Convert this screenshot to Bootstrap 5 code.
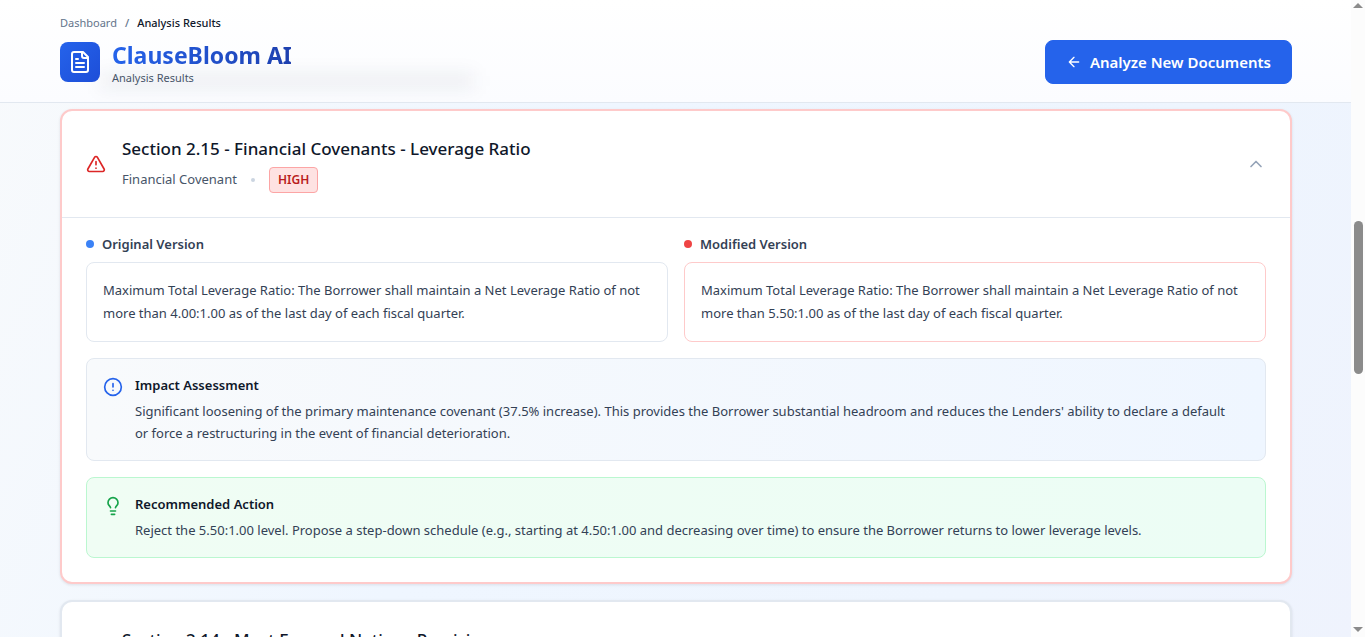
<!DOCTYPE html>
<html lang="en">
<head>
<meta charset="utf-8">
<meta name="viewport" content="width=device-width, initial-scale=1">
<title>ClauseBloom AI - Analysis Results</title>
<link rel="stylesheet" href="https://cdn.jsdelivr.net/npm/bootstrap@5.3.0/dist/css/bootstrap.min.css">
<style>
  html, body { height: 100%; }
  body {
    font-family: "Noto Sans", "Open Sans", sans-serif;
    font-size: 13px;
    color: #334155;
    background: linear-gradient(115deg, #f8fafc 0%, #eff6ff 40%, #eef5fe 75%, #eff3fd 100%);
    overflow: hidden;
  }
  .app-shell { height: 100vh; padding-right: 14px; }
  .page-wrap { padding-left: 60px; padding-right: 59px; }
  .app-header {
    background: linear-gradient(#fff, #fbfcff);
    border-bottom: 1px solid #e2e8f0;
    padding-top: 13px;
    padding-bottom: 17px;
    position: relative;
    overflow: hidden;
  }
  .app-header::before {
    content: "";
    position: absolute;
    left: 100px; top: 74px;
    width: 374px; height: 14px;
    background: rgba(15, 23, 42, .07);
    filter: blur(9px);
  }
  .app-header > * { position: relative; }
  .crumbs { font-size: 11px; line-height: 20px; --bs-breadcrumb-divider-color: #64748b; }
  .crumbs a { color: #64748b; }
  .crumbs .active { color: #0f172a; font-weight: 500; }
  .brand-row { margin-top: 6px; }
  .brand-group { gap: 12px; }
  .brand-icon { width: 40px; height: 40px; border-radius: 8px; background: linear-gradient(135deg, #2563eb, #1d4ed8); }
  .brand-name {
    font-size: 23px; line-height: 32px; font-weight: 700;
    background: linear-gradient(90deg, #2563eb, #1e40af);
    -webkit-background-clip: text; background-clip: text; color: transparent;
  }
  .brand-sub { font-size: 11px; line-height: 14px; color: #475569; }
  .btn-analyze {
    --bs-btn-bg: #2563eb; --bs-btn-border-color: #2563eb;
    height: 44px; padding: 0 20px; border-radius: 8px; font-size: 15px; font-weight: 600;
  }
  .clause-list { padding-top: 6px; }
  .clause { border: 2px solid #e2e8f0; border-radius: 12px; background: #fff; box-shadow: 0 1px 3px rgba(15, 23, 42, .1); }
  .clause-high { border-color: #fecaca; }
  .clause-head { padding: 24px; border-bottom: 1px solid #e2e8f0; }
  .clause-title { font-size: 17px; line-height: 28px; font-weight: 500; color: #0f172a; }
  .clause-meta { color: #475569; gap: 14px; }
  .meta-dot { width: 4px; height: 4px; background: #cbd5e1; }
  .severity { font-size: 12px; line-height: 16px; font-weight: 600; color: #b91c1c; background: #fee2e2; border: 1px solid #fca5a5; border-radius: 4px; padding: 4px 8px; }
  .clause-body { padding: 16px 24px 24px; }
  .version-title { font-size: 13px; line-height: 20px; font-weight: 600; }
  .dot { width: 8px; height: 8px; }
  .dot-blue { background: #3b82f6; }
  .dot-red { background: #ef4444; }
  .quote { border: 1px solid #e2e8f0; border-radius: 8px; padding: 16px; line-height: 23px; }
  .quote-red { border-color: #fecaca; }
  .note { border: 1px solid #e2e8f0; border-radius: 8px; padding: 16px; line-height: 22px; gap: 12px; }
  .note svg { margin-top: 2px; }
  .note-impact { background: linear-gradient(90deg, #f8fafc, #eff6ff); }
  .note-action { background: linear-gradient(90deg, #f0fdf4, #ecfdf5); border-color: #bbf7d0; }
  .note-title { font-size: 13px; line-height: 21px; font-weight: 600; color: #0f172a; }
  .scroll-rail { width: 14px; background: #fcfcfc; }
  .scroll-thumb { width: 9px; height: 153px; margin-top: 211px; background: #8b8b8b; border-radius: 5px; }
</style>
</head>
<body>
<div class="app-shell d-flex flex-column">
  <header class="app-header page-wrap flex-shrink-0">
    <nav aria-label="breadcrumb">
      <ol class="breadcrumb crumbs mb-0">
        <li class="breadcrumb-item"><a class="text-decoration-none" href="#">Dashboard</a></li>
        <li class="breadcrumb-item active" aria-current="page">Analysis Results</li>
      </ol>
    </nav>
    <div class="brand-row d-flex justify-content-between align-items-center">
      <div class="brand-group d-flex align-items-center">
        <div class="brand-icon d-flex align-items-center justify-content-center">
          <svg width="24" height="24" viewBox="0 0 24 24" fill="none" stroke="#fff" stroke-width="2" stroke-linecap="round" stroke-linejoin="round" aria-hidden="true"><path d="M15 2H6a2 2 0 0 0-2 2v16a2 2 0 0 0 2 2h12a2 2 0 0 0 2-2V7Z"/><path d="M14 2v4a2 2 0 0 0 2 2h4M10 9H8M16 13H8M16 17H8"/></svg>
        </div>
        <div>
          <h1 class="brand-name mb-0">ClauseBloom AI</h1>
          <p class="brand-sub mb-0">Analysis Results</p>
        </div>
      </div>
      <button type="button" class="btn btn-primary btn-analyze d-flex align-items-center justify-content-center gap-2">
        <svg width="16" height="16" viewBox="0 0 24 24" fill="none" stroke="currentColor" stroke-width="2" stroke-linecap="round" stroke-linejoin="round" aria-hidden="true"><path d="m12 19-7-7 7-7M19 12H5"/></svg>
        Analyze New Documents
      </button>
    </div>
  </header>

  <main class="clause-list page-wrap flex-grow-1 overflow-hidden">
    <article class="clause clause-high mb-3">
      <div class="clause-head d-flex align-items-center gap-3">
        <svg width="20" height="20" viewBox="0 0 24 24" fill="none" stroke="#dc2626" stroke-width="2" stroke-linecap="round" stroke-linejoin="round" aria-hidden="true"><path d="m21.73 18-8-14a2 2 0 0 0-3.48 0l-8 14A2 2 0 0 0 4 21h16a2 2 0 0 0 1.73-3M12 9v4M12 17h.01"/></svg>
        <div class="flex-grow-1">
          <h2 class="clause-title mb-1">Section 2.15 - Financial Covenants - Leverage Ratio</h2>
          <div class="clause-meta d-flex align-items-center">
            <span>Financial Covenant</span>
            <span class="meta-dot rounded-circle"></span>
            <span class="severity">HIGH</span>
          </div>
        </div>
        <svg width="20" height="20" viewBox="0 0 24 24" fill="none" stroke="#94a3b8" stroke-width="2" stroke-linecap="round" stroke-linejoin="round" aria-hidden="true"><path d="m18 15-6-6-6 6"/></svg>
      </div>
      <div class="clause-body d-flex flex-column gap-3">
        <div class="row gx-3">
          <section class="col-6">
            <h3 class="version-title d-flex align-items-center gap-2 mb-2"><span class="dot dot-blue rounded-circle"></span>Original Version</h3>
            <div class="quote">Maximum Total Leverage Ratio: The Borrower shall maintain a Net Leverage Ratio of not more than 4.00:1.00 as of the last day of each fiscal quarter.</div>
          </section>
          <section class="col-6">
            <h3 class="version-title d-flex align-items-center gap-2 mb-2"><span class="dot dot-red rounded-circle"></span>Modified Version</h3>
            <div class="quote quote-red">Maximum Total Leverage Ratio: The Borrower shall maintain a Net Leverage Ratio of not more than 5.50:1.00 as of the last day of each fiscal quarter.</div>
          </section>
        </div>
        <section class="note note-impact d-flex">
          <svg class="flex-shrink-0" width="20" height="20" viewBox="0 0 24 24" fill="none" stroke="#2563eb" stroke-width="2" stroke-linecap="round" aria-hidden="true"><circle cx="12" cy="12" r="10"/><path d="M12 8v4M12 16h.01"/></svg>
          <div>
            <h3 class="note-title mb-1">Impact Assessment</h3>
            <p class="mb-0 pe-3">Significant loosening of the primary maintenance covenant (37.5% increase). This provides the Borrower substantial headroom and reduces the Lenders' ability to declare a default or force a restructuring in the event of financial deterioration.</p>
          </div>
        </section>
        <section class="note note-action d-flex">
          <svg class="flex-shrink-0" width="20" height="20" viewBox="0 0 24 24" fill="none" stroke="#16a34a" stroke-width="2" stroke-linecap="round" stroke-linejoin="round" aria-hidden="true"><path d="M15 14c.2-1 .7-1.700 1.500-2.500 1-.9 1.500-2.200 1.500-3.500A6 6 0 0 0 6 8c0 1 .2 2.200 1.500 3.500.7.7 1.300 1.500 1.500 2.500M9 18h6M10 22h4"/></svg>
          <div>
            <h3 class="note-title mb-1">Recommended Action</h3>
            <p class="mb-0 pe-3">Reject the 5.50:1.00 level. Propose a step-down schedule (e.g., starting at 4.50:1.00 and decreasing over time) to ensure the Borrower returns to lower leverage levels.</p>
          </div>
        </section>
      </div>
    </article>
    <article class="clause">
      <div class="clause-head d-flex align-items-start gap-3">
        <svg class="mt-3" width="20" height="20" viewBox="0 0 24 24" fill="none" stroke="#2563eb" stroke-width="2" stroke-linecap="round" aria-hidden="true"><circle cx="12" cy="12" r="10"/><path d="M12 8v4M12 16h.01"/></svg>
        <h2 class="clause-title mb-1">Section 2.14 - Most Favored Nations Provision</h2>
      </div>
    </article>
  </main>
</div>
<div class="scroll-rail position-fixed top-0 end-0 h-100 d-flex flex-column align-items-center" aria-hidden="true">
  <svg width="10" height="10" viewBox="0 0 10 10"><path d="M0 8 5 3l5 5z" fill="#8b8b8b"/></svg>
  <div class="scroll-thumb"></div>
  <svg class="mt-auto" width="10" height="10" viewBox="0 0 10 10"><path d="M0 0h10L5 5z" fill="#8b8b8b"/></svg>
</div>
<script src="https://cdn.jsdelivr.net/npm/bootstrap@5.3.0/dist/js/bootstrap.bundle.min.js"></script>
</body>
</html>
